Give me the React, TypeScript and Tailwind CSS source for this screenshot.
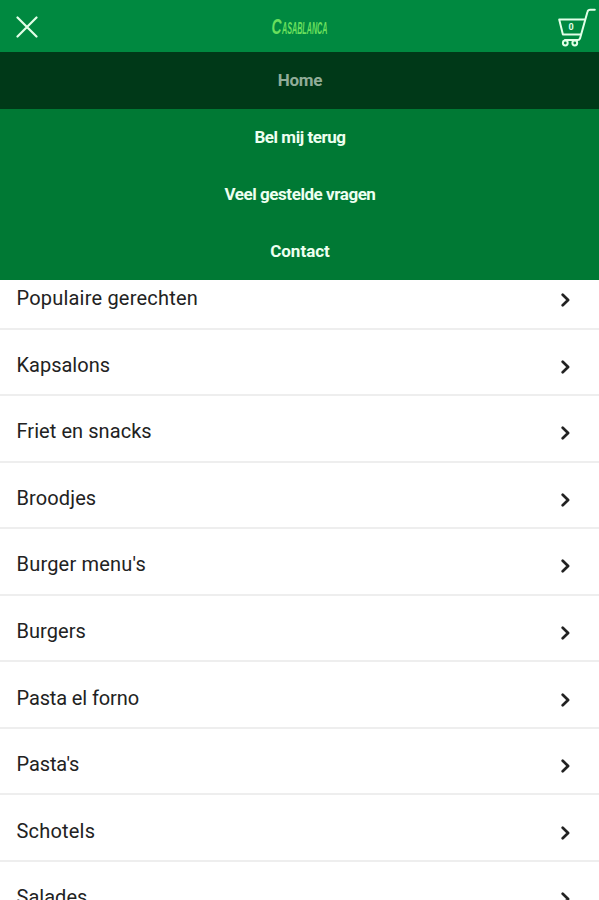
const menuItems = ['Bel mij terug', 'Veel gestelde vragen', 'Contact'];

const categories = [
  { name: 'Populaire gerechten', tracking: 'tracking-[0.2px]' },
  { name: 'Kapsalons', tracking: 'tracking-[0px]' },
  { name: 'Friet en snacks', tracking: 'tracking-[0.06px]' },
  { name: 'Broodjes', tracking: 'tracking-[0.12px]' },
  { name: "Burger menu's", tracking: 'tracking-[0.2px]' },
  { name: 'Burgers', tracking: 'tracking-[0.05px]' },
  { name: 'Pasta el forno', tracking: 'tracking-[-0.12px]' },
  { name: "Pasta's", tracking: 'tracking-[-0.1px]' },
  { name: 'Schotels', tracking: 'tracking-[0.2px]' },
  { name: 'Salades', tracking: 'tracking-[0.02px]' },
];

function CloseIcon() {
  return (
    <svg width="22" height="22" viewBox="0 0 22 22" fill="none" stroke="currentColor" strokeWidth="2.2" strokeLinecap="round">
      <path d="M1.5 1.5l19 19M20.5 1.5l-19 19" />
    </svg>
  );
}

function Logo() {
  return (
    <svg width="64" height="26" viewBox="-2 0 64 26" fill="currentColor" className="overflow-visible font-['Liberation_Sans',sans-serif] font-bold italic">
      <text x="1.5" y="21" fontSize="22" textLength="10" lengthAdjust="spacingAndGlyphs">
        C
      </text>
      <text x="12" y="21" fontSize="16" textLength="45.5" lengthAdjust="spacingAndGlyphs">
        ASABLANCA
      </text>
    </svg>
  );
}

function CartIcon() {
  return (
    <svg width="40" height="40" viewBox="0 0 40 40" fill="none" stroke="currentColor" strokeWidth="2" strokeLinecap="round" strokeLinejoin="round">
      <path d="M37.8 1.8h-4.6q-2.2 0-2.7 2L23 30.4q-.5 1.6-2.2 1.6H8" />
      <path d="M27.4 11.6H2.2l3.7 14.8h17.6" />
      <circle cx="8.3" cy="35" r="2.4" />
      <circle cx="17.8" cy="35" r="2.4" />
    </svg>
  );
}

function Chevron() {
  return (
    <svg width="9" height="14" viewBox="0 0 9 14" fill="none" stroke="currentColor" strokeWidth="2.7" strokeLinecap="round" strokeLinejoin="round">
      <path d="M1.7 1.7L7.1 7l-5.4 5.3" />
    </svg>
  );
}

export default function App() {
  return (
    <div className="flex h-[900px] w-full flex-col overflow-hidden bg-white font-['Roboto',sans-serif]">
      <header className="grid h-[52px] shrink-0 grid-cols-[1fr_auto_1fr] items-center bg-[#008940] text-[#e2ffe8]">
        <button aria-label="Sluiten" className="mt-0.5 ml-4 w-fit">
          <CloseIcon />
        </button>
        <h1 className="text-[#69df5d]">
          <Logo />
        </h1>
        <button aria-label="Winkelwagen" className="relative mt-1 mr-0.5 justify-self-end">
          <CartIcon />
          <span className="absolute top-[15px] left-[11.5px] text-[9px] leading-none font-bold">0</span>
        </button>
      </header>

      <nav className="shrink-0 bg-[#007934] text-center text-[17px] font-bold text-[#edfff0]">
        <a href="#" className="flex h-[57px] items-center justify-center bg-[#003918] pl-px tracking-[-0.2px] text-[#91ad99]">
          Home
        </a>
        {menuItems.map((item) => (
          <a key={item} href="#" className="flex h-[57px] items-center justify-center pl-px tracking-[-0.45px] last:tracking-[0px]">
            {item}
          </a>
        ))}
      </nav>

      <main className="min-h-0 flex-1 overflow-hidden">
        <ul className="-mt-4.25">
          {categories.map(({ name, tracking }) => (
            <li key={name} className="h-[66.55px] border-b-2 border-[#eeeeee]">
              <a href="#" className="flex h-full items-center justify-between pt-2.5 pr-[29.5px] pl-[16.5px] text-[#222222]">
                <span className={`pb-1 text-[20px] ${tracking}`}>{name}</span>
                <Chevron />
              </a>
            </li>
          ))}
        </ul>
      </main>
    </div>
  );
}
